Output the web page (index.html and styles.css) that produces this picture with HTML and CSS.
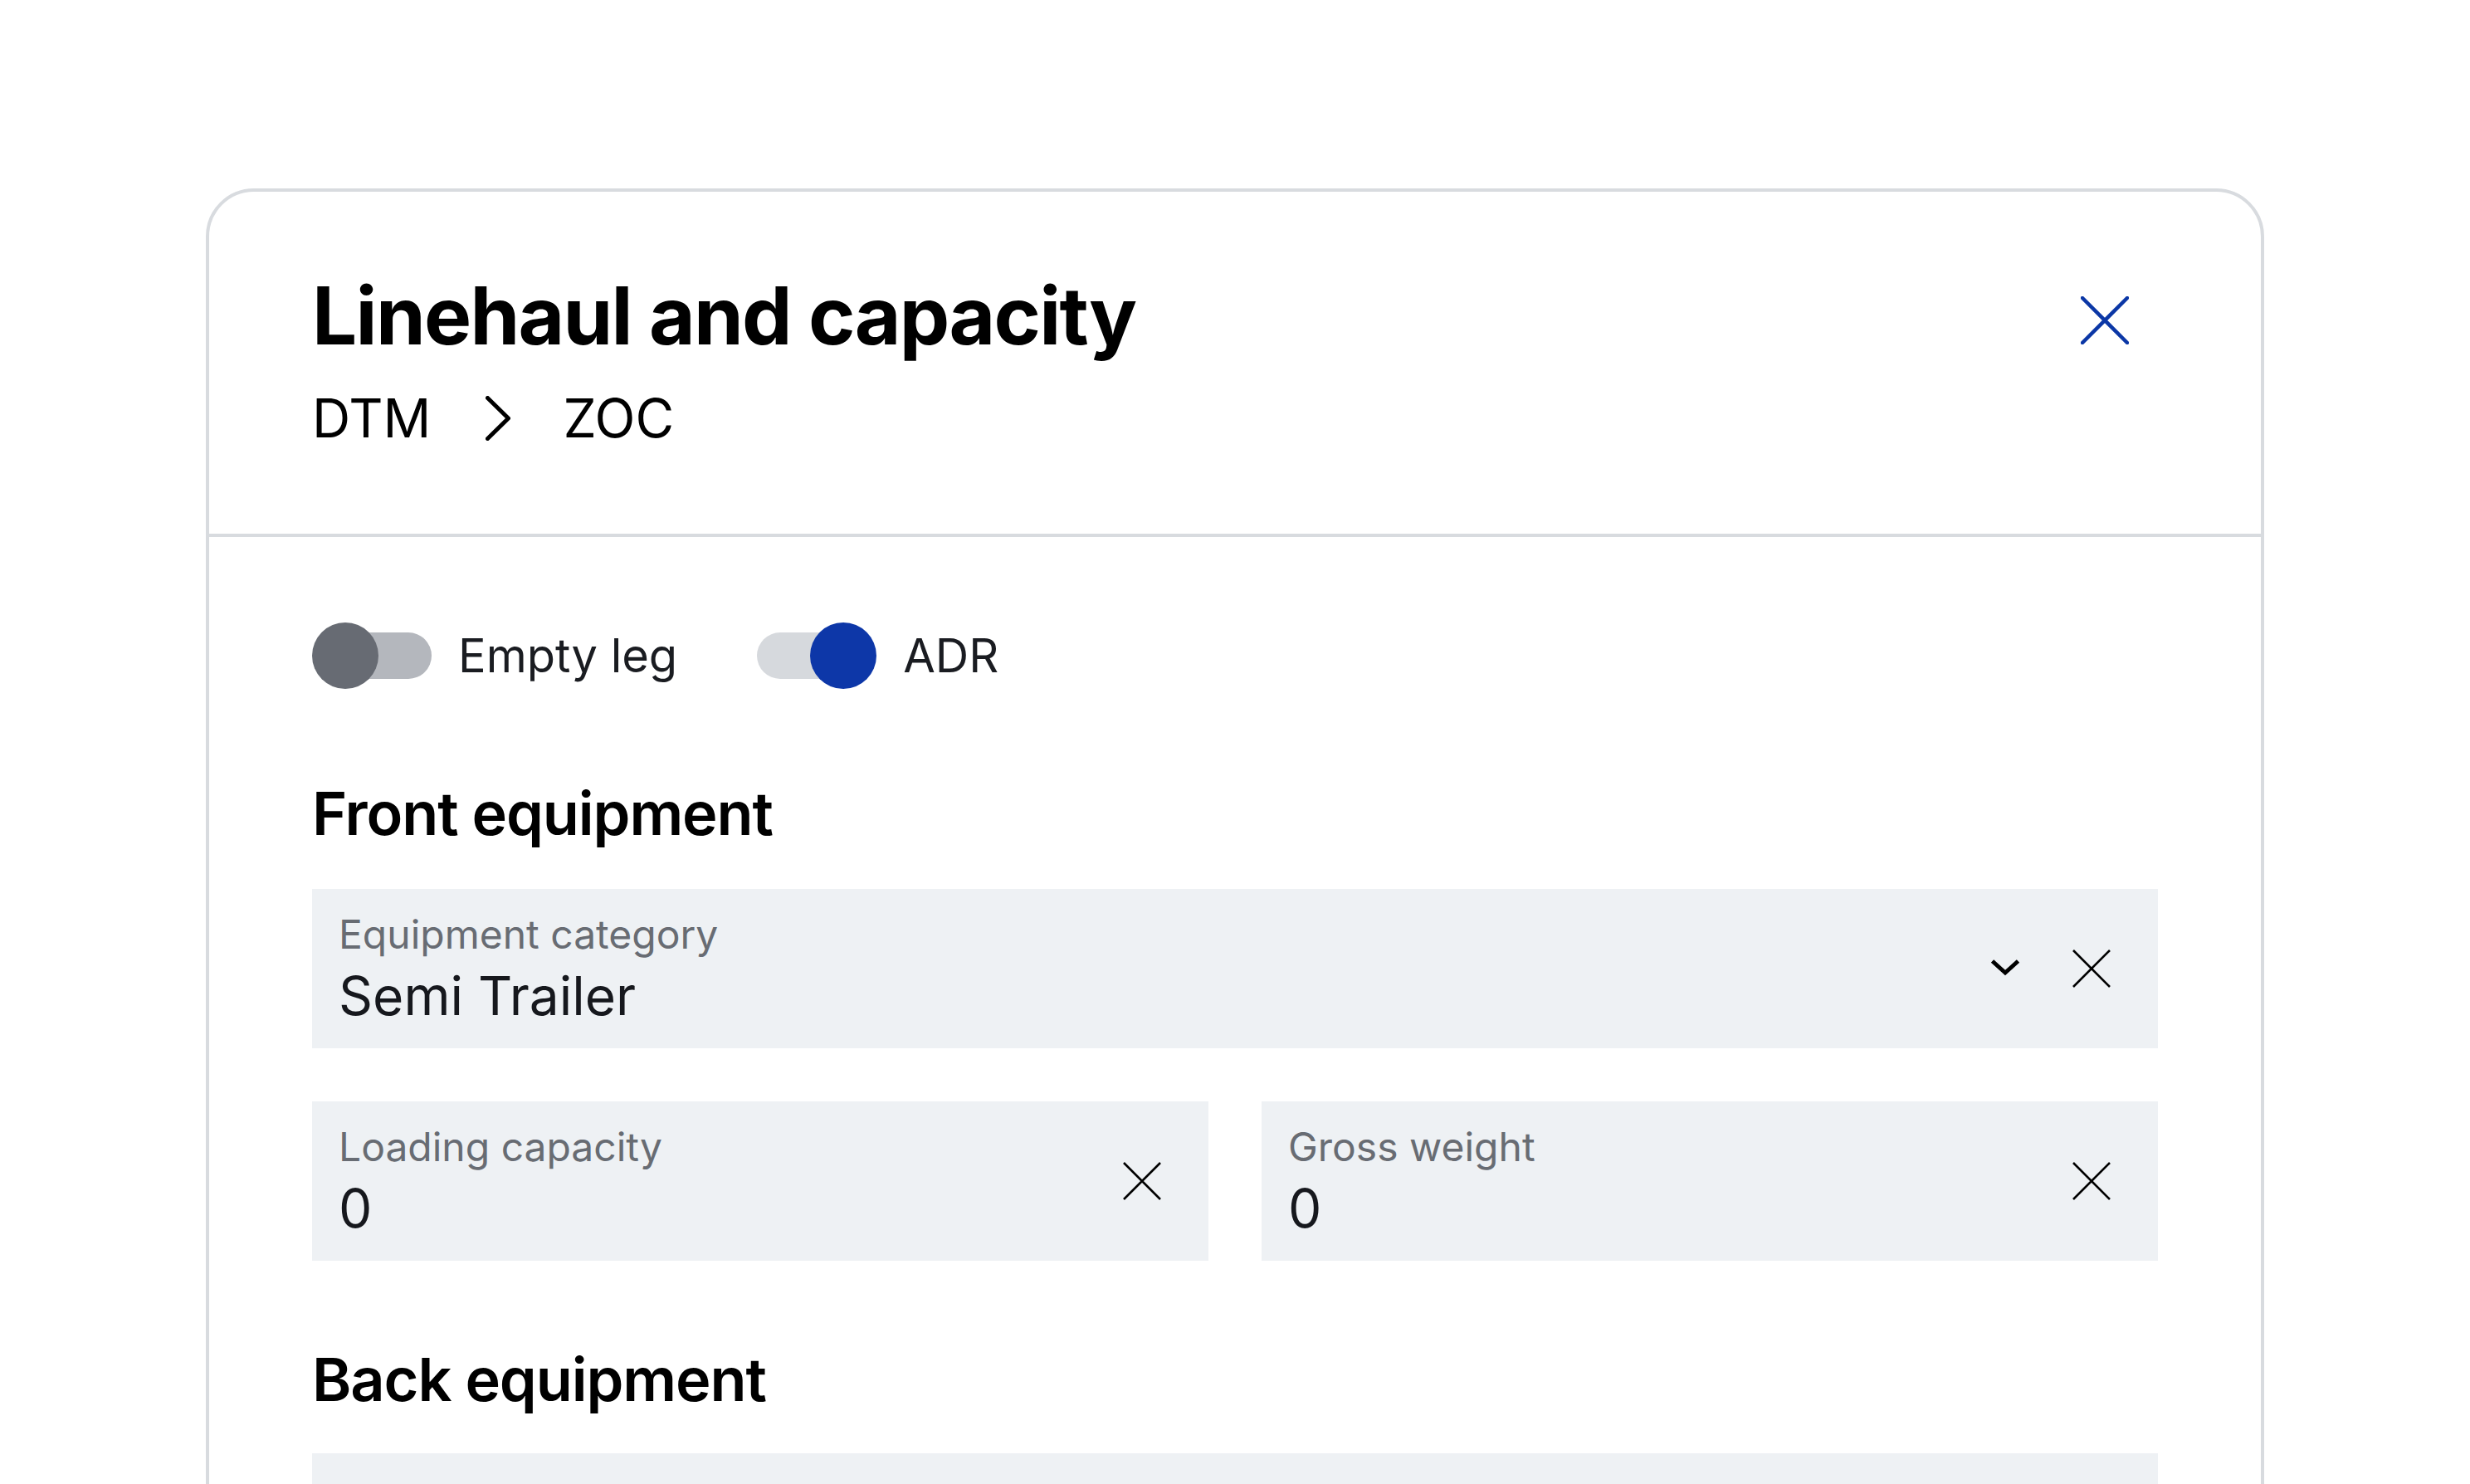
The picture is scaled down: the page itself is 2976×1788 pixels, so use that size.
FILE: index.html
```html
<!DOCTYPE html>
<html lang="en">
<head>
<meta charset="utf-8">
<title>Linehaul and capacity</title>
<link rel="stylesheet" href="styles.css">
</head>
<body>
<div class="page">
  <section class="card">
    <header class="card-header">
      <div class="title-block">
        <h1 class="title">Linehaul and capacity</h1>
        <div class="route">
          <span>DTM</span>
          <svg class="route-chev" width="30" height="54" viewBox="0 0 30 54"><polyline points="2.5,2.5 27.5,27 2.5,51.5" fill="none" stroke="#000" stroke-width="5" stroke-linecap="round" stroke-linejoin="round"/></svg>
          <span>ZOC</span>
        </div>
      </div>
      <button class="close-btn" aria-label="Close">
        <svg width="58" height="58" viewBox="0 0 58 58"><path d="M2 2 L56 56 M56 2 L2 56" stroke="#0b37a6" stroke-width="4.5" stroke-linecap="round"/></svg>
      </button>
    </header>

    <div class="card-body">
      <div class="toggles">
        <label class="toggle-item">
          <span class="toggle off"><span class="track"></span><span class="knob"></span></span>
          <span class="toggle-label">Empty leg</span>
        </label>
        <label class="toggle-item">
          <span class="toggle on"><span class="track"></span><span class="knob"></span></span>
          <span class="toggle-label">ADR</span>
        </label>
      </div>

      <h2 class="section-title first">Front equipment</h2>
      <div class="field">
        <div class="field-text">
          <div class="field-label">Equipment category</div>
          <div class="field-value">Semi Trailer</div>
        </div>
        <div class="field-icons">
          <svg class="icon chev" width="64" height="64" viewBox="0 0 64 64"><polyline points="16.5,23 32,37 47.5,23" fill="none" stroke="#000" stroke-width="5"/></svg>
          <svg class="icon clear" width="64" height="64" viewBox="0 0 64 64"><path d="M10 10 L54 54 M54 10 L10 54" stroke="#000" stroke-width="2.6"/></svg>
        </div>
      </div>
      <div class="field-row">
        <div class="field">
          <div class="field-text">
            <div class="field-label">Loading capacity</div>
            <div class="field-value">0</div>
          </div>
          <div class="field-icons">
            <svg class="icon clear" width="64" height="64" viewBox="0 0 64 64"><path d="M10 10 L54 54 M54 10 L10 54" stroke="#000" stroke-width="2.6"/></svg>
          </div>
        </div>
        <div class="field">
          <div class="field-text">
            <div class="field-label">Gross weight</div>
            <div class="field-value">0</div>
          </div>
          <div class="field-icons">
            <svg class="icon clear" width="64" height="64" viewBox="0 0 64 64"><path d="M10 10 L54 54 M54 10 L10 54" stroke="#000" stroke-width="2.6"/></svg>
          </div>
        </div>
      </div>

      <h2 class="section-title second">Back equipment</h2>
      <div class="field field-empty"></div>
    </div>
  </section>
</div>
</body>
</html>
```

FILE: styles.css
```css
html, body {
  margin: 0;
  padding: 0;
  overflow: hidden;
  background: #ffffff;
}

body {
  font-family: Inter, "Noto Sans", "Liberation Sans", sans-serif;
  color: #16181d;
}

.page {
  padding-top: 227px;
}

.card {
  width: 2480px;
  box-sizing: border-box;
  margin: 0 auto;
  border: 4px solid #d8dbdf;
  border-radius: 58px;
  background: #fff;
  min-height: 2000px;
}

.card-header {
  display: flex;
  justify-content: space-between;
  align-items: flex-start;
  height: 416px;
  box-sizing: border-box;
  padding: 91px 124px 0 124px;
  border-bottom: 4px solid #d8dbdf;
}

.title {
  margin: 0;
  font-size: 96px;
  line-height: 116px;
  font-weight: 700;
  color: #000;
  letter-spacing: -1.7px;
}

.route {
  display: flex;
  align-items: center;
  gap: 66px;
  margin-top: 26px;
  font-size: 64px;
  line-height: 80px;
  color: #000;
}

.route-chev {
  display: block;
  margin-right: -3px;
}

.close-btn {
  width: 128px;
  height: 128px;
  padding: 0;
  margin: 0;
  border: 0;
  background: transparent;
  display: flex;
  align-items: center;
  justify-content: center;
  cursor: pointer;
}

.card-body {
  padding: 103px 124px 0 124px;
}

.toggles {
  display: flex;
  align-items: center;
  gap: 96px;
  height: 80px;
}

.toggle-item {
  display: flex;
  align-items: center;
  gap: 32px;
}

.toggle {
  position: relative;
  display: block;
  width: 144px;
  height: 80px;
}

.toggle .track {
  position: absolute;
  top: 12px;
  width: 132px;
  height: 56px;
  border-radius: 28px;
}

.toggle .knob {
  position: absolute;
  top: 0;
  width: 80px;
  height: 80px;
  border-radius: 50%;
}

.toggle.off .track {
  left: 12px;
  background: #b4b7bd;
}

.toggle.off .knob {
  left: 0;
  background: #676b73;
}

.toggle.on .track {
  left: 0;
  background: #d6d9dd;
}

.toggle.on .knob {
  right: 0;
  background: #0d37a8;
}

.toggle-label {
  font-size: 56px;
  line-height: 80px;
  color: #1a1c21;
}

.section-title {
  margin: 0;
  font-size: 72px;
  line-height: 88px;
  font-weight: 600;
  color: #000;
  letter-spacing: -1.1px;
}

.section-title.first {
  margin-top: 106px;
  margin-bottom: 47px;
}

.section-title.second {
  margin-top: 99px;
  margin-bottom: 45px;
}

.field {
  display: flex;
  align-items: center;
  justify-content: space-between;
  height: 192px;
  box-sizing: border-box;
  padding: 0 48px 0 32px;
  background: #eef1f4;
}

.field-text {
  display: flex;
  flex-direction: column;
  padding-top: 4px;
}

.field-label {
  font-size: 48px;
  line-height: 56px;
  color: #686c73;
}

.field-value {
  margin-top: 6px;
  font-size: 64px;
  line-height: 80px;
  color: #16181d;
}

.field-icons {
  display: flex;
  align-items: center;
  gap: 40px;
}

.icon {
  display: block;
}

.field-row {
  display: grid;
  grid-template-columns: 1fr 1fr;
  gap: 64px;
  margin-top: 64px;
}
```
